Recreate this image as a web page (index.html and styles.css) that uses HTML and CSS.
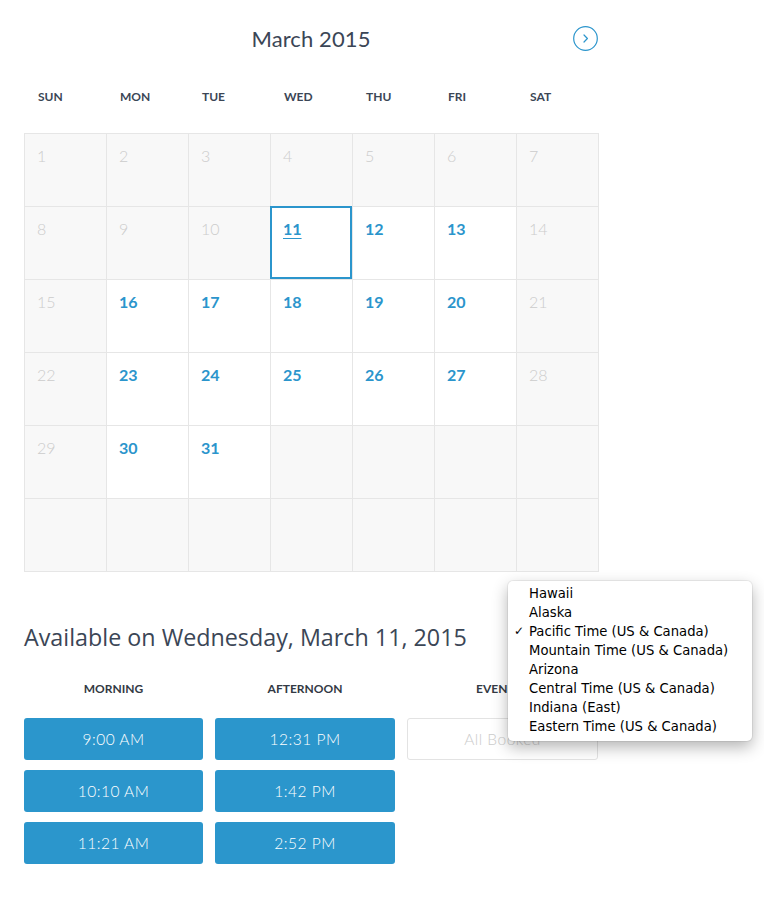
FILE: index.html
```html
<!DOCTYPE html>
<html>
<head>
<meta charset="utf-8">
<link rel="stylesheet" href="styles.css">
</head>
<body>
<div class="page">
  <div class="cal-header">
    <div class="title">March 2015</div>
    <button class="next" aria-label="Next month">
      <svg width="25" height="25" viewBox="0 0 25 25"><circle cx="12.5" cy="12.5" r="11.8" fill="none" stroke="#2b95cc" stroke-width="1.2"/><path d="M11 9 L14.4 12.5 L11 16" fill="none" stroke="#2b95cc" stroke-width="1.2" stroke-linecap="round" stroke-linejoin="round"/></svg>
    </button>
  </div>
  <div class="days">
    <div>SUN</div><div>MON</div><div>TUE</div><div>WED</div><div>THU</div><div>FRI</div><div>SAT</div>
  </div>
  <div class="grid">
    <div class="cell off">1</div><div class="cell off">2</div><div class="cell off">3</div><div class="cell off">4</div><div class="cell off">5</div><div class="cell off">6</div><div class="cell off">7</div>
    <div class="cell off">8</div><div class="cell off">9</div><div class="cell off">10</div><div class="cell on sel"><span class="u">11</span></div><div class="cell on">12</div><div class="cell on">13</div><div class="cell off">14</div>
    <div class="cell off">15</div><div class="cell on">16</div><div class="cell on">17</div><div class="cell on">18</div><div class="cell on">19</div><div class="cell on">20</div><div class="cell off">21</div>
    <div class="cell off">22</div><div class="cell on">23</div><div class="cell on">24</div><div class="cell on">25</div><div class="cell on">26</div><div class="cell on">27</div><div class="cell off">28</div>
    <div class="cell off">29</div><div class="cell on">30</div><div class="cell on">31</div><div class="cell off"></div><div class="cell off"></div><div class="cell off"></div><div class="cell off"></div>
    <div class="cell off"></div><div class="cell off"></div><div class="cell off"></div><div class="cell off"></div><div class="cell off"></div><div class="cell off"></div><div class="cell off"></div>
  </div>

  <h2 class="avail">Available on Wednesday, March 11, 2015</h2>

  <div class="times">
    <div class="col">
      <div class="label">MORNING</div>
      <button class="slot">9:00 AM</button>
      <button class="slot">10:10 AM</button>
      <button class="slot">11:21 AM</button>
    </div>
    <div class="col">
      <div class="label">AFTERNOON</div>
      <button class="slot">12:31 PM</button>
      <button class="slot">1:42 PM</button>
      <button class="slot">2:52 PM</button>
    </div>
    <div class="col">
      <div class="label">EVENING</div>
      <button class="slot booked">All Booked</button>
    </div>
  </div>
</div>

<ul class="menu">
  <li>Hawaii</li>
  <li>Alaska</li>
  <li class="checked">Pacific Time (US &amp; Canada)</li>
  <li>Mountain Time (US &amp; Canada)</li>
  <li>Arizona</li>
  <li>Central Time (US &amp; Canada)</li>
  <li>Indiana (East)</li>
  <li>Eastern Time (US &amp; Canada)</li>
</ul>
</body>
</html>
```

FILE: styles.css
```css
* { box-sizing: border-box; }
html, body { margin: 0; padding: 0; background: #fff; }
body { font-family: Lato, "Open Sans", sans-serif; color: #3b4656; }

.page { width: 622px; padding: 0 24px; }

.cal-header {
  height: 78px;
  display: flex;
  align-items: center;
  justify-content: center;
  position: relative;
}
.title { font-size: 22px; line-height: 30px; color: #3b4656; letter-spacing: 0.1px; }
.next {
  position: absolute;
  right: 0;
  top: 26px;
  width: 25px; height: 25px;
  padding: 0; border: 0; background: none;
  display: block;
}
.next svg { display: block; }

.days {
  display: grid;
  grid-template-columns: repeat(7, 82px);
  height: 30px;
  margin: 4px 0 21px 1px;
}
.days div {
  font-size: 12px;
  font-weight: 700;
  line-height: 30px;
  padding-left: 13px;
  color: #3b4656;
}

.grid {
  display: grid;
  grid-template-columns: repeat(7, 82px);
  grid-auto-rows: 73px;
  border-top: 1px solid #e6e6e6;
  border-left: 1px solid #e6e6e6;
  width: 575px;
}
.cell {
  border-right: 1px solid #e6e6e6;
  border-bottom: 1px solid #e6e6e6;
  padding: 12px 0 0 12px;
  font-size: 16px;
  line-height: 20px;
  position: relative;
}
.cell.off { background: #f8f8f8; color: #cccccc; font-weight: 300; }
.cell.on { background: #fff; color: #2b95cc; font-weight: 700; }
.cell.sel::after {
  content: "";
  position: absolute;
  top: -1px; left: -1px; right: 0; bottom: 0;
  border: 2px solid #2b95cc;
}
.u { text-decoration: underline; text-underline-offset: 3px; }

.avail {
  margin: 50px 0 0 0;
  font-family: "Open Sans", Lato, sans-serif;
  font-size: 23.3px;
  line-height: 30px;
  font-weight: 400;
  color: #3b4656;
}

.times {
  display: grid;
  grid-template-columns: 179px 180px 191px;
  column-gap: 12px;
  margin-top: 28px;
}
.col { display: flex; flex-direction: column; gap: 10px; }
.label {
  font-size: 12px;
  font-weight: 700;
  line-height: 18px;
  text-align: center;
  color: #333a44;
  margin-bottom: 10px;
}
.slot {
  height: 42px;
  border: 0;
  border-radius: 3px;
  background: #2b96cc;
  color: #fff;
  font-family: Lato, "Open Sans", sans-serif;
  font-size: 15.5px;
  font-weight: 300;
  letter-spacing: 0.5px;
  padding: 0;
}
.slot.booked {
  background: #fff;
  border: 1px solid #e3e3e3;
  color: #cccccc;
}

.menu {
  position: absolute;
  left: 508px;
  top: 581px;
  width: 244px;
  margin: 0;
  padding: 3px 0 5px 0;
  list-style: none;
  background: #fff;
  border-radius: 5px;
  box-shadow: 0 0 0 1px rgba(0,0,0,0.06), 0 6px 16px rgba(0,0,0,0.3);
  font-family: "DejaVu Sans", sans-serif;
  font-size: 13.2px;
  color: #000;
}
.menu li {
  line-height: 19px;
  padding-left: 21px;
  position: relative;
  white-space: nowrap;
}
.menu li.checked::before {
  content: "\2713";
  position: absolute;
  left: 6px;
  font-size: 12px;
}
```
